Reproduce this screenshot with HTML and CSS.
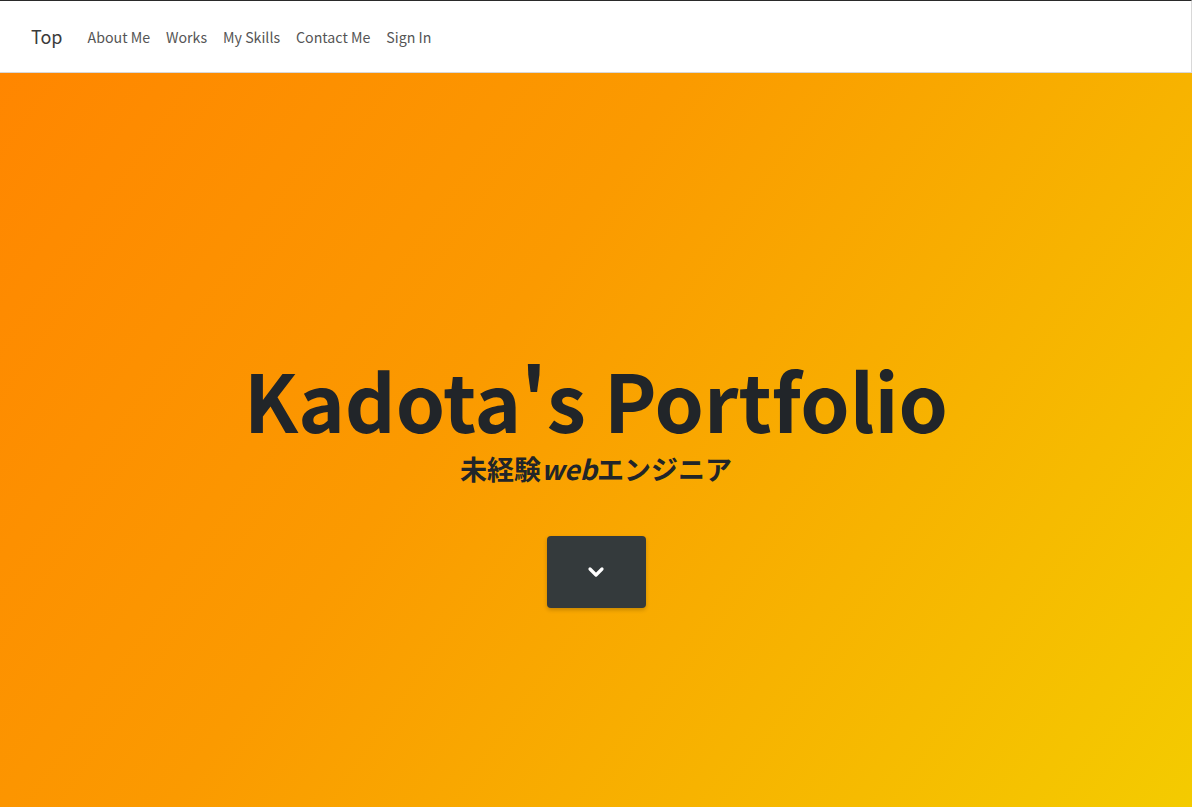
FILE: index.html
```html
<!DOCTYPE html>
<html lang="ja">
<head>
<meta charset="utf-8">
<title>Kadota's Portfolio</title>
<link rel="stylesheet" href="styles.css">
</head>
<body>
<nav class="navbar">
  <a class="brand" href="#">Top</a>
  <ul class="nav-links">
    <li><a href="#">About Me</a></li>
    <li><a href="#">Works</a></li>
    <li><a href="#">My Skills</a></li>
    <li><a href="#">Contact Me</a></li>
    <li><a href="#">Sign In</a></li>
  </ul>
</nav>
<header class="hero">
  <h1 class="title">Kadota's Portfolio</h1>
  <p class="subtitle">未経験<em>web</em>エンジニア</p>
  <a class="down-btn" href="#">
    <svg width="18" height="12" viewBox="0 0 18 12"><path d="M3 3 L9 9 L15 3" fill="none" stroke="#fff" stroke-width="3.2" stroke-linecap="round" stroke-linejoin="round"/></svg>
  </a>
</header>
</body>
</html>
```
FILE: styles.css
```css
* { box-sizing: border-box; }
html, body { margin: 0; padding: 0; }
body {
  font-family: "Noto Sans CJK JP", "Noto Sans", sans-serif;
  color: #212529;
  overflow: hidden;
}
.navbar {
  height: 73px;
  background: #fff;
  border-top: 1px solid #2a2a2a;
  border-right: 1px solid #d8d8d8;
  border-bottom: 1px solid #d8d8d8;
  display: flex;
  align-items: center;
  padding: 0 0 2px 31px;
}
.brand {
  font-size: 18px;
  color: #3b3b3b;
  text-decoration: none;
  margin-right: 25px;
}
.nav-links {
  display: flex;
  list-style: none;
  margin: 0;
  padding: 0;
  gap: 16px;
}
.nav-links a {
  font-size: 14.2px;
  color: #555;
  text-decoration: none;
}
.hero {
  height: 734px;
  background: linear-gradient(125deg, #ff8600 0%, #fb9a00 40%, #f7b300 70%, #f4cb00 100%);
  display: flex;
  flex-direction: column;
  align-items: center;
  padding-top: 279px;
}
.title {
  margin: 0;
  font-size: 79px;
  font-weight: 700;
  line-height: 1.2;
  color: #212529;
}
.subtitle {
  margin: 6px 0 0;
  font-size: 27px;
  font-weight: 700;
  line-height: 1.2;
}
.subtitle em { font-style: italic; }
.down-btn {
  margin-top: 51px;
  width: 99px;
  height: 72px;
  background: #343a3c;
  border-radius: 4px;
  display: flex;
  align-items: center;
  justify-content: center;
  box-shadow: 0 2px 4px rgba(0,0,0,0.2);
}
```
